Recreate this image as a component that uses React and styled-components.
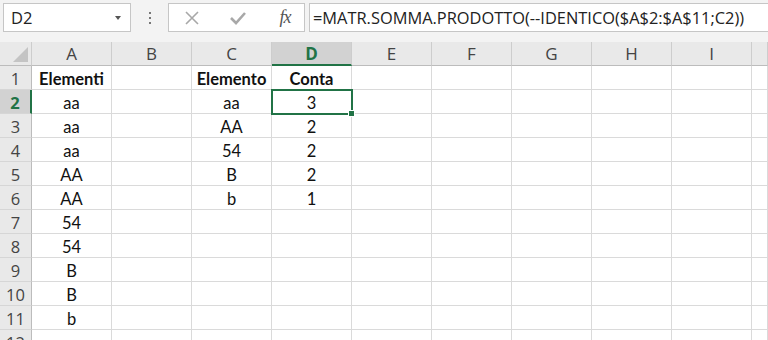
import React from 'react'
import styled, { createGlobalStyle, css } from 'styled-components'

const GREEN = '#217346'

const Global = createGlobalStyle`
  html, body { margin: 0; padding: 0; }
  body {
    width: 768px;
    height: 340px;
    overflow: hidden;
    background: #fff;
  }
`

const Page = styled.div`
  display: flex;
  flex-direction: column;
  width: 768px;
  height: 340px;
  overflow: hidden;
`

const Toolbar = styled.div`
  flex-shrink: 0;
  display: flex;
  align-items: stretch;
  height: 42px;
  padding: 3px 0 10px 3px;
  box-sizing: border-box;
  background: #f3f3f3;
  font-family: "Open Sans", "Noto Sans", sans-serif;
`

const NameBox = styled.div`
  position: relative;
  display: flex;
  align-items: center;
  width: 128px;
  box-sizing: border-box;
  padding-left: 7px;
  background: #fff;
  border: 1px solid #c6c6c6;
  font-size: 16.5px;
  color: #222;
`

const Caret = styled.span`
  position: absolute;
  right: 9px;
  top: 12px;
  border-left: 3.5px solid transparent;
  border-right: 3.5px solid transparent;
  border-top: 4px solid #555;
`

const Dots = styled.div`
  display: flex;
  flex-direction: column;
  justify-content: center;
  gap: 3px;
  width: 37px;
  align-items: center;
  span {
    width: 2px;
    height: 2px;
    background: #777;
  }
`

const ButtonGroup = styled.div`
  display: flex;
  align-items: center;
  width: 137px;
  box-sizing: border-box;
  background: #fff;
  border: 1px solid #c6c6c6;
  padding-left: 12px;
  gap: 24px;
`

const IconBtn = styled.span`
  display: flex;
  align-items: center;
  justify-content: center;
  width: 22px;
  height: 22px;
`

const Fx = styled.span`
  font-family: "Liberation Serif", "DejaVu Serif", serif;
  font-style: italic;
  font-size: 18px;
  color: #555;
  letter-spacing: -1px;
  margin-left: 2px;
`

const FormulaInput = styled.div`
  flex: 1;
  margin-left: 4px;
  display: flex;
  align-items: center;
  padding-left: 3px;
  background: #fff;
  border: 1px solid #c6c6c6;
  border-right: none;
  font-size: 16.4px;
  color: #222;
  white-space: nowrap;
  overflow: hidden;
`

const Sheet = styled.div`
  flex-shrink: 0;
  display: grid;
  grid-template-columns: 32px repeat(9, 80px) 1fr;
  grid-auto-rows: 24px;
`

const Head = styled.div`
  display: flex;
  align-items: center;
  justify-content: center;
  box-sizing: border-box;
  background: ${p => (p.$active ? '#d2d2d2' : '#e9e9e9')};
  color: ${p => (p.$active ? GREEN : '#444')};
  font-family: "Open Sans", "Noto Sans", sans-serif;
  font-size: 17px;
  font-weight: ${p => (p.$active ? 700 : 400)};
  border-right: 1px solid #cdcdcd;
  border-bottom: 1px solid #bcbcbc;
  ${p => p.$col && p.$active && css`
    border-bottom: 2px solid ${GREEN};
  `}
  ${p => p.$row && css`
    font-size: 16.5px;
    border-right: ${p.$active ? `2px solid ${GREEN}` : '1px solid #bcbcbc'};
    border-bottom: 1px solid #d6d6d6;
    padding-top: 1px;
  `}
`

const Corner = styled(Head)`
  position: relative;
  &::after {
    content: '';
    position: absolute;
    right: 3px;
    bottom: 3px;
    border-left: 15px solid transparent;
    border-bottom: 15px solid #c4c4c4;
  }
`

const Cell = styled.div`
  position: relative;
  display: flex;
  align-items: center;
  justify-content: center;
  box-sizing: border-box;
  border-right: 1px solid #dadada;
  border-bottom: 1px solid #dadada;
  font-family: "Lato", "Open Sans", sans-serif;
  font-size: 16.5px;
  font-weight: ${p => (p.$bold ? 700 : 400)};
  color: #111;
  padding-top: 2px;
  ${p => p.$selected && css`
    outline: 2px solid ${GREEN};
    outline-offset: -1px;
    z-index: 2;
    &::after {
      content: '';
      position: absolute;
      right: -4px;
      bottom: -4px;
      width: 5px;
      height: 5px;
      background: ${GREEN};
      border: 1px solid #fff;
    }
  `}
`

const cols = ['A', 'B', 'C', 'D', 'E', 'F', 'G', 'H', 'I', '']

const data = {
  1: { A: 'Elementi', C: 'Elemento', D: 'Conta' },
  2: { A: 'aa', C: 'aa', D: '3' },
  3: { A: 'aa', C: 'AA', D: '2' },
  4: { A: 'aa', C: '54', D: '2' },
  5: { A: 'AA', C: 'B', D: '2' },
  6: { A: 'AA', C: 'b', D: '1' },
  7: { A: '54' },
  8: { A: '54' },
  9: { A: 'B' },
  10: { A: 'B' },
  11: { A: 'b' },
  12: {},
}

const CrossIcon = () => (
  <svg width="16" height="16" viewBox="0 0 16 16">
    <path d="M2 2 L14 14 M14 2 L2 14" stroke="#a8a8a8" strokeWidth="1.6" fill="none" />
  </svg>
)

const CheckIcon = () => (
  <svg width="18" height="16" viewBox="0 0 18 16">
    <path d="M2 8 L7 13 L16 3" stroke="#a8a8a8" strokeWidth="2.6" fill="none" />
  </svg>
)

const App = () => {
  return (
    <Page>
      <Global />
      <Toolbar>
        <NameBox>
          D2
          <Caret />
        </NameBox>
        <Dots>
          <span />
          <span />
          <span />
        </Dots>
        <ButtonGroup>
          <IconBtn><CrossIcon /></IconBtn>
          <IconBtn><CheckIcon /></IconBtn>
          <IconBtn><Fx>fx</Fx></IconBtn>
        </ButtonGroup>
        <FormulaInput>=MATR.SOMMA.PRODOTTO(--IDENTICO($A$2:$A$11;C2))</FormulaInput>
      </Toolbar>
      <Sheet>
        <Corner />
        {cols.map((c, i) => (
          <Head key={i} $col $active={c === 'D'}>{c}</Head>
        ))}
        {Object.keys(data).map(r => {
          const row = Number(r)
          return (
            <React.Fragment key={r}>
              <Head $row $active={row === 2}>{r}</Head>
              {cols.map((c, i) => (
                <Cell
                  key={i}
                  $bold={row === 1}
                  $selected={row === 2 && c === 'D'}
                >
                  {data[r][c] || ''}
                </Cell>
              ))}
            </React.Fragment>
          )
        })}
      </Sheet>
    </Page>
  )
}

export default App
